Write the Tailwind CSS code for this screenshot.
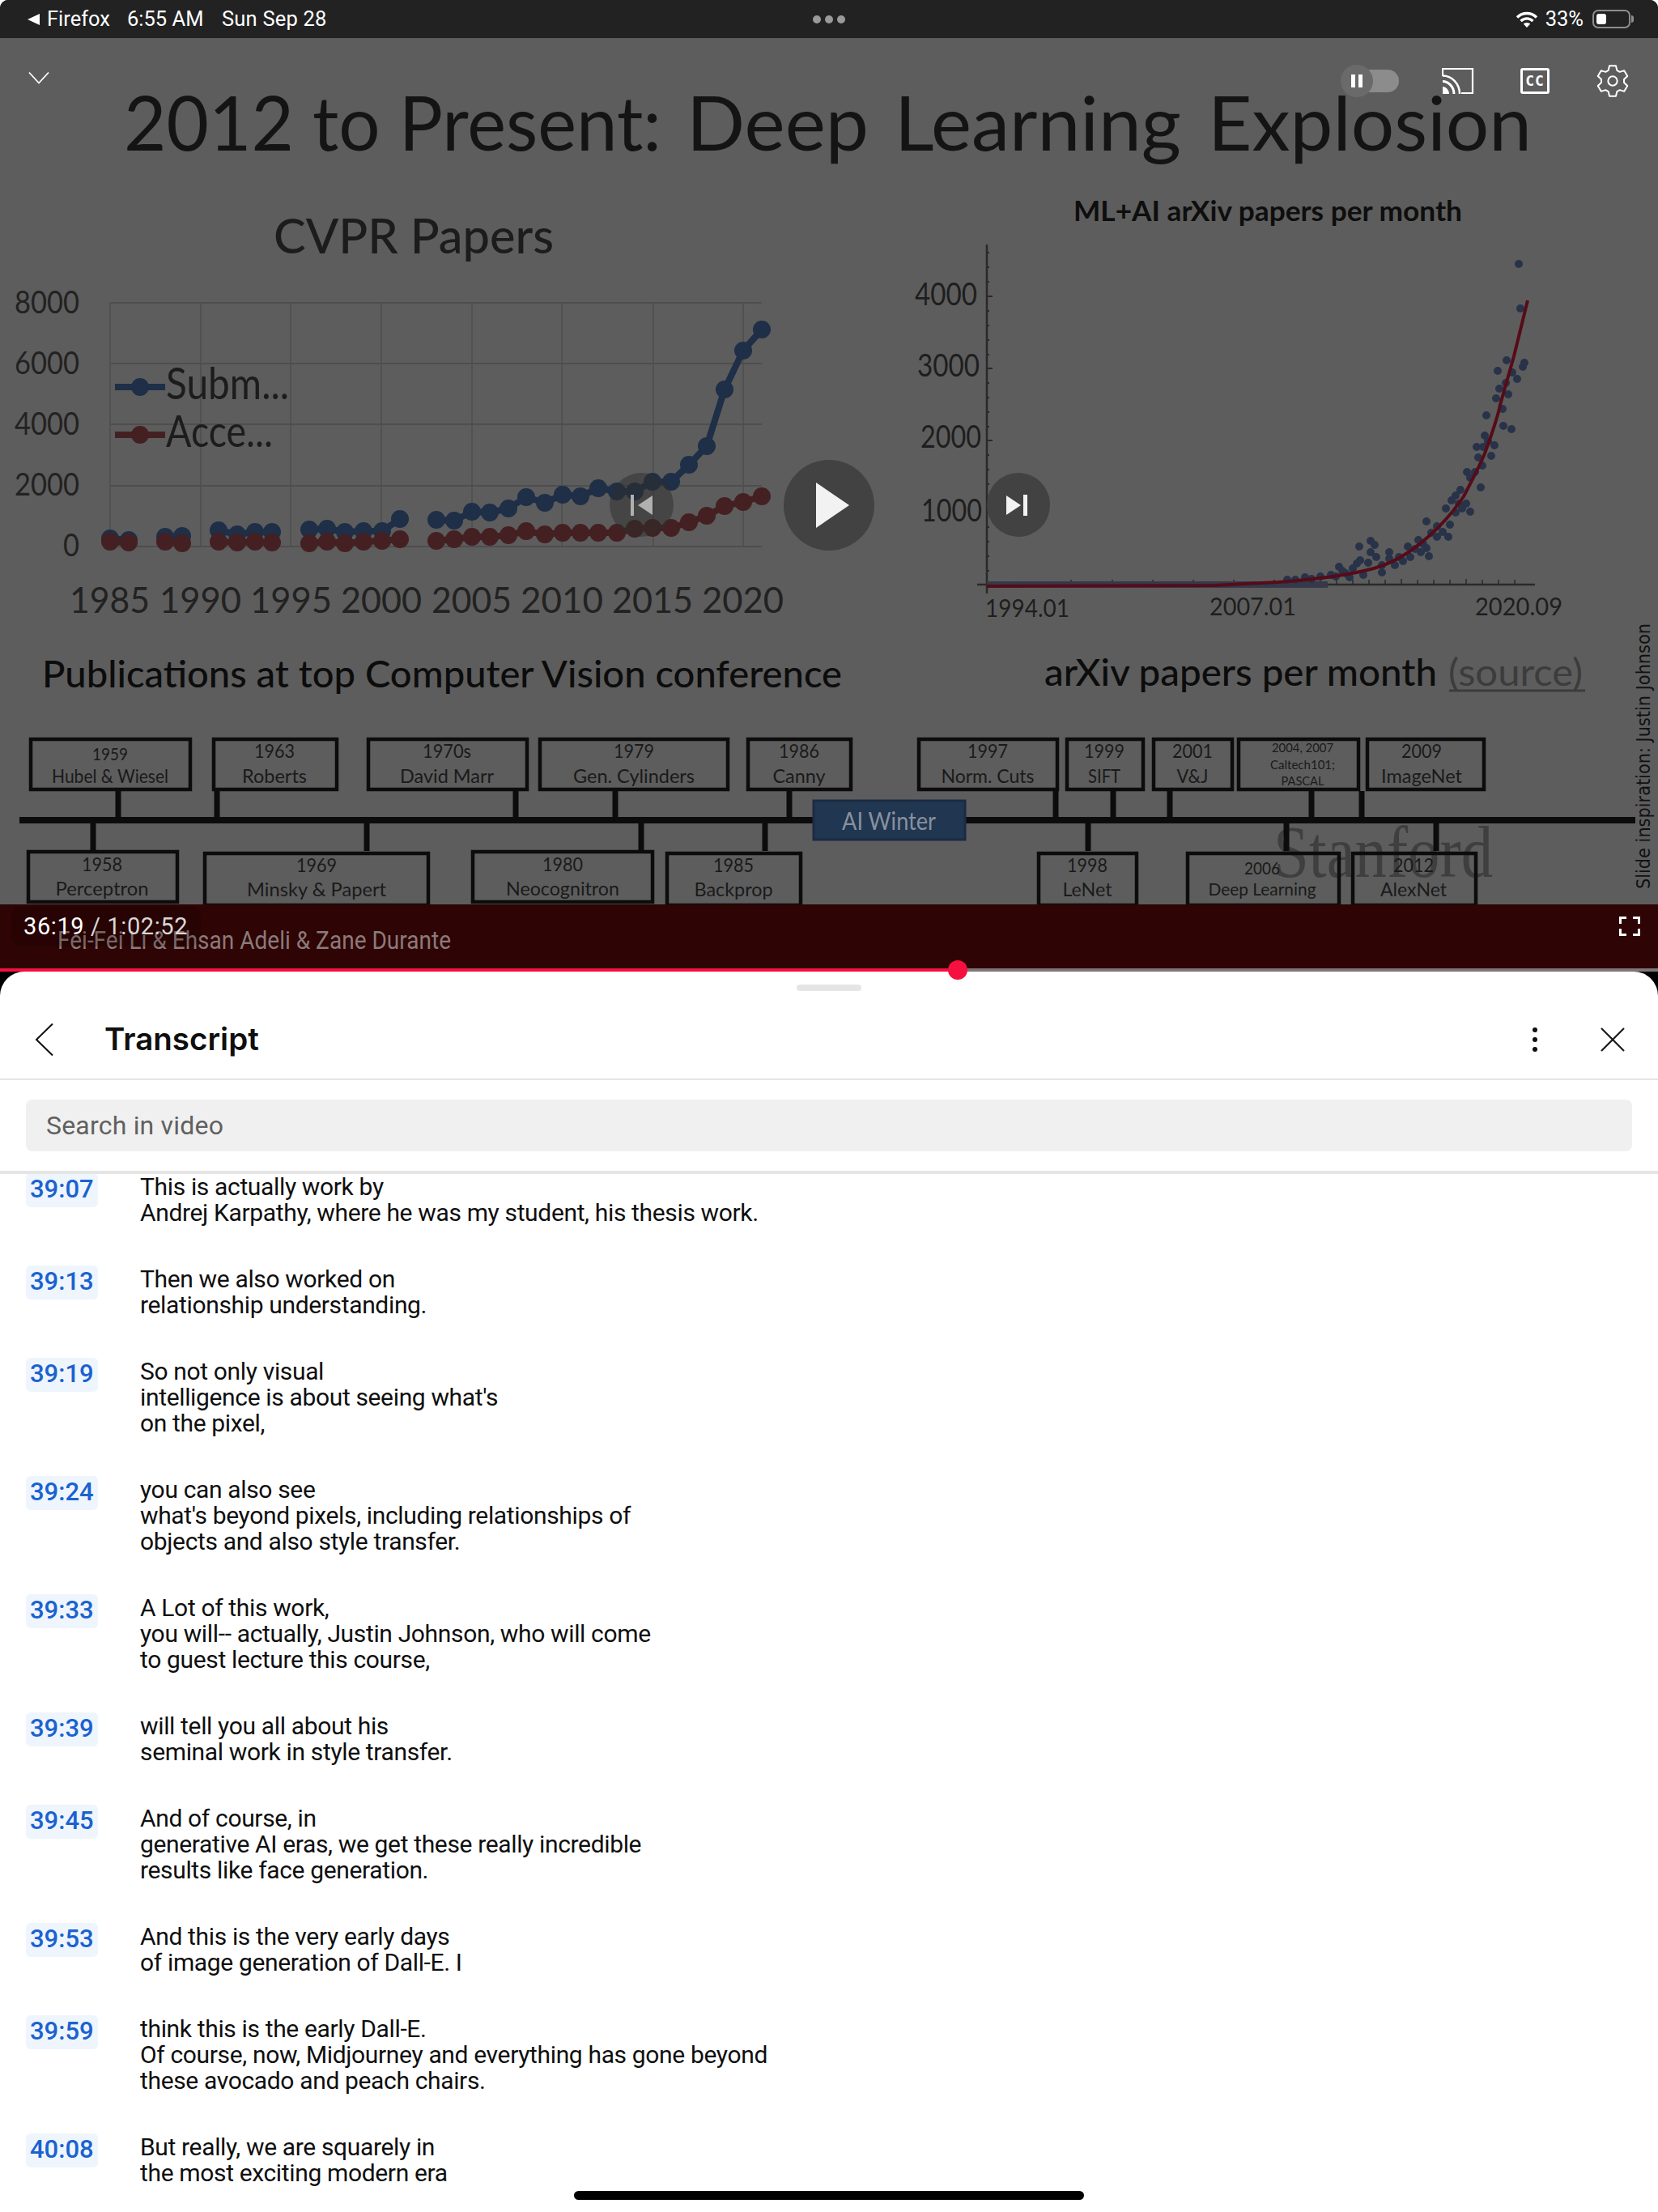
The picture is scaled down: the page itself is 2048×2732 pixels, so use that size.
<!DOCTYPE html>
<html lang="en">
<head>
<meta charset="UTF-8">
<title>Transcript</title>
<script src="https://cdn.jsdelivr.net/npm/@tailwindcss/browser@4"></script>
</head>
<body class="bg-white">
<div class="w-[2048px] h-[2732px] flex flex-col overflow-hidden relative bg-black font-[Roboto] rounded-t-[10px]">

  <!-- status bar -->
  <div class="h-[47px] shrink-0 bg-[#222222] text-white text-[25.5px] relative flex items-center justify-between pl-[34px] pr-[30px]">
    <div class="flex items-center">
      <svg width="15" height="14" viewBox="0 0 15 14" class="mr-[9px]"><path d="M15 0v14L0 7z" fill="#fff"/></svg>
      <span class="w-[99px]">Firefox</span>
      <span class="w-[117px]">6:55 AM</span>
      <span class="tracking-[0.2px]">Sun Sep 28</span>
    </div>
    <div class="absolute left-[1004px] top-[19px] flex gap-[5px]">
      <div class="w-[10px] h-[10px] rounded-full bg-[#9a9a9a]"></div>
      <div class="w-[10px] h-[10px] rounded-full bg-[#9a9a9a]"></div>
      <div class="w-[10px] h-[10px] rounded-full bg-[#9a9a9a]"></div>
    </div>
    <div class="flex items-center">
      <svg width="28" height="20" viewBox="0 0 28 20" class="mr-[9px]" fill="none" stroke="#fff" stroke-width="3.4">
        <path d="M2 7.5c7-6.600 17-6.600 24 0"/><path d="M6.500 12c4.500-4.200 10.500-4.200 15 0"/><path d="M14 20l-4.200-4.600c2.400-2 6-2 8.400 0z" fill="#fff" stroke="none"/>
      </svg>
      <span class="mr-[11px]">33%</span>
      <div class="w-[47px] h-[23px] rounded-[7px] border-2 border-[#8e8e8e] p-[3px]">
        <div class="w-[12px] h-full rounded-[3px] bg-white"></div>
      </div>
      <div class="w-[3px] h-[9px] rounded-r-full bg-[#8e8e8e] ml-[1px]"></div>
    </div>
  </div>

  <!-- video -->
  <div class="h-[1153px] shrink-0 relative z-10 bg-[#5d5d5d]">
    <svg width="2048" height="1153" viewBox="0 47 2048 1153" class="block font-[Lato]" fill="#1c1c1c">
      <g font-size="94" fill="#141414">
        <text x="153" y="186" textLength="664" lengthAdjust="spacingAndGlyphs">2012 to Present:</text>
        <text x="848" y="186" textLength="225" lengthAdjust="spacingAndGlyphs">Deep</text>
        <text x="1105" y="186" textLength="354" lengthAdjust="spacingAndGlyphs">Learning</text>
        <text x="1492" y="186" textLength="400" lengthAdjust="spacingAndGlyphs">Explosion</text>
      </g>

      <!-- CVPR chart -->
      <text x="338" y="313" font-size="60" textLength="346" lengthAdjust="spacingAndGlyphs" fill="#1c1c1c" font-weight="500">CVPR Papers</text>
      <g stroke="#4e4e4e" stroke-width="2" fill="none">
        <path d="M136 374H941M136 449H941M136 524H941M136 600H941M136 675H941"/>
        <path d="M136 374V675M248 374V675M359 374V675M471 374V675M583 374V675M694 374V675M807 374V675M918 374V675" stroke-width="1.500"/>
      </g>
      <g font-size="38" fill="#222" text-anchor="end">
        <text x="98" y="387" textLength="80" lengthAdjust="spacingAndGlyphs">8000</text>
        <text x="98" y="462" textLength="80" lengthAdjust="spacingAndGlyphs">6000</text>
        <text x="98" y="537" textLength="80" lengthAdjust="spacingAndGlyphs">4000</text>
        <text x="98" y="612" textLength="80" lengthAdjust="spacingAndGlyphs">2000</text>
        <text x="98" y="687" textLength="20" lengthAdjust="spacingAndGlyphs">0</text>
      </g>
      <path d="M136 665L159 667M204 663L225 662M270 655L293 660L315 657L336 657M382 654L404 653L426 657L449 656L472 656L494 641M539 642L561 643L583 632L605 633L628 628L650 614L673 621L695 611L717 613L739 603L762 607L784 607L806 595L829 595L851 574L873 551L895 481L918 433L941 407M142 478H204" fill="none" stroke="#1e2f47" stroke-width="8" stroke-linejoin="round"/>
      <path d="M136 665h0M159 667h0M204 663h0M225 662h0M270 655h0M293 660h0M315 657h0M336 657h0M382 654h0M404 653h0M426 657h0M449 656h0M472 656h0M494 641h0M539 642h0M561 643h0M583 632h0M605 633h0M628 628h0M650 614h0M673 621h0M695 611h0M717 613h0M739 603h0M762 607h0M784 607h0M806 595h0M829 595h0M851 574h0M873 551h0M895 481h0M918 433h0M941 407h0M173 478h0" stroke="#1e2f47" stroke-width="22" stroke-linecap="round" fill="none"/>
      <path d="M136 669L159 670M204 669L225 671M270 669L293 670L315 669L336 670M382 671L404 669L426 671L449 669L472 668L494 666M539 668L561 666L583 663L605 663L628 661L650 656L673 660L695 658L717 658L739 658L762 658L784 653L806 652L829 652L851 645L873 637L895 625L918 620L941 613M142 537H204" stroke="#452022" stroke-width="8" fill="none"/>
      <path d="M136 669h0M159 670h0M204 669h0M225 671h0M270 669h0M293 670h0M315 669h0M336 670h0M382 671h0M404 669h0M426 671h0M449 669h0M472 668h0M494 666h0M539 668h0M561 666h0M583 663h0M605 663h0M628 661h0M650 656h0M673 660h0M695 658h0M717 658h0M739 658h0M762 658h0M784 653h0M806 652h0M829 652h0M851 645h0M873 637h0M895 625h0M918 620h0M941 613h0M173 537h0" stroke="#452022" stroke-width="22" stroke-linecap="round" fill="none"/>
      <text x="205" y="493" font-size="54" textLength="152" lengthAdjust="spacingAndGlyphs" fill="#1c1c1c">Subm...</text>
      <text x="205" y="552" font-size="54" textLength="132" lengthAdjust="spacingAndGlyphs" fill="#1c1c1c">Acce...</text>
      <g font-size="44" fill="#222">
        <text x="86" y="757" textLength="99" lengthAdjust="spacingAndGlyphs">1985</text>
        <text x="197" y="757" textLength="101" lengthAdjust="spacingAndGlyphs">1990</text>
        <text x="309" y="757" textLength="101" lengthAdjust="spacingAndGlyphs">1995</text>
        <text x="421" y="757" textLength="100" lengthAdjust="spacingAndGlyphs">2000</text>
        <text x="533" y="757" textLength="99" lengthAdjust="spacingAndGlyphs">2005</text>
        <text x="643" y="757" textLength="102" lengthAdjust="spacingAndGlyphs">2010</text>
        <text x="756" y="757" textLength="100" lengthAdjust="spacingAndGlyphs">2015</text>
        <text x="867" y="757" textLength="101" lengthAdjust="spacingAndGlyphs">2020</text>
      </g>
      <text x="52" y="849" font-size="47" textLength="988" lengthAdjust="spacingAndGlyphs" fill="#0c0c0c" font-weight="500">Publications at top Computer Vision conference</text>

      <!-- arXiv chart -->
      <text x="1326" y="273" font-size="35" textLength="480" lengthAdjust="spacingAndGlyphs" fill="#0e0e0e" font-weight="700">ML+AI arXiv papers per month</text>
      <g font-size="38" fill="#1e1e1e">
        <text x="1130" y="377" textLength="77" lengthAdjust="spacingAndGlyphs">4000</text>
        <text x="1133" y="465" textLength="77" lengthAdjust="spacingAndGlyphs">3000</text>
        <text x="1137" y="553" textLength="75" lengthAdjust="spacingAndGlyphs">2000</text>
        <text x="1138" y="644" textLength="75" lengthAdjust="spacingAndGlyphs">1000</text>
      </g>
      <g stroke="#2a2a2a" fill="none">
        <path d="M1219 302V733M1207 722H1896" stroke-width="2.500"/>
        <path d="M1219 366h7M1219 455h7M1219 544h7M1219 633h7M1219 312h3M1219 330h3M1219 348h3M1219 384h3M1219 402h3M1219 420h3M1219 438h3M1219 473h3M1219 491h3M1219 509h3M1219 527h3M1219 562h3M1219 580h3M1219 598h3M1219 616h3M1219 651h3M1219 669h3M1219 687h3M1219 705h3" stroke-width="2"/>
        <path d="M1323 722v-6M1374 722v-6M1424 722v-6M1474 722v-6M1524 722v-6M1574 722v-6M1631 722v-6M1651 722v-7M1671 722v-6M1691 722v-6M1711 722v-6M1731 722v-7M1751 722v-6M1771 722v-6M1791 722v-6M1811 722v-7M1831 722v-6M1851 722v-6M1871 722v-6" stroke-width="1.500"/>
      </g>
      <path d="M1219 722H1640" stroke="#35394a" stroke-width="8" fill="none"/>
      <path d="M1876 326h0M1878 381h0M1861 445h0M1883 448h0M1850 458h0M1881 453h0M1860 473h0M1874 468h0M1852 480h0M1848 492h0M1863 487h0M1836 513h0M1857 526h0M1867 530h0M1834 538h0M1824 552h0M1846 550h0M1842 563h0M1826 565h0M1831 575h0M1812 583h0M1822 583h0M1829 602h0M1798 612h0M1793 618h0M1811 622h0M1786 628h0M1816 632h0M1798 633h0M1762 644h0M1791 648h0M1775 650h0M1782 657h0M1789 663h0M1775 663h0M1752 667h0M1739 675h0M1762 677h0M1679 675h0M1693 668h0M1698 673h0M1693 682h0M1716 682h0M1755 682h0M1765 687h0M1742 688h0M1716 690h0M1733 693h0M1680 692h0M1690 695h0M1723 698h0M1654 700h0M1707 698h0M1671 702h0M1707 707h0M1658 705h0M1684 710h0M1667 713h0M1631 712h0M1612 713h0M1644 710h0M1590 716h0M1838 545h0M1832 552h0M1816 590h0M1804 605h0M1802 622h0M1806 628h0M1768 658h0M1758 672h0M1748 678h0M1728 688h0M1700 688h0M1676 696h0M1662 708h0M1650 712h0M1620 715h0M1600 716h0M1868 460h0M1856 505h0" stroke="#283349" stroke-width="10" stroke-linecap="round" fill="none"/>
      <path d="M1219 724L1500 723L1579 719C1620 716 1660 712 1697 702C1730 693 1755 672 1775 653C1790 638 1800 625 1808 613C1820 590 1828 575 1834 560C1845 530 1850 515 1853 500L1870 440L1887 371" stroke="#560c18" stroke-width="4" fill="none"/>
      <g font-size="30" fill="#1e1e1e">
        <text x="1217" y="762" textLength="104" lengthAdjust="spacingAndGlyphs">1994.01</text>
        <text x="1494" y="760" textLength="107" lengthAdjust="spacingAndGlyphs">2007.01</text>
        <text x="1822" y="760" textLength="108" lengthAdjust="spacingAndGlyphs">2020.09</text>
      </g>
      <text x="1290" y="847" font-size="47" textLength="485" lengthAdjust="spacingAndGlyphs" fill="#0c0c0c" font-weight="500">arXiv papers per month</text>
      <text x="1789" y="847" font-size="47" textLength="166" lengthAdjust="spacingAndGlyphs" fill="#3c3c3c">(source)</text>
      <path d="M1790 853H1958" stroke="#3c3c3c" stroke-width="3"/>
      <text transform="translate(2038 1098) rotate(-90)" font-size="23" font-family="DejaVu Sans" textLength="328" lengthAdjust="spacingAndGlyphs" fill="#111">Slide inspiration: Justin Johnson</text>

      <!-- timeline -->
      <text x="1573" y="1083" font-size="92" font-family="Liberation Serif" textLength="271" lengthAdjust="spacingAndGlyphs" fill="#3f3f3f">Stanford</text>
      <g stroke="#0c0c0c" stroke-width="4.500" fill="none">
        <rect x="38" y="913" width="197" height="62"/><rect x="264" y="913" width="152" height="62"/><rect x="455" y="913" width="196" height="62"/><rect x="667" y="913" width="232" height="62"/><rect x="924" y="913" width="127" height="62"/>
        <rect x="1135" y="913" width="171" height="62"/><rect x="1318" y="913" width="94" height="62"/><rect x="1425" y="913" width="97" height="62"/><rect x="1530" y="913" width="148" height="62"/><rect x="1689" y="913" width="144" height="62"/>
        <rect x="35" y="1052" width="184" height="62"/><rect x="253" y="1054" width="276" height="64"/><rect x="584" y="1052" width="222" height="62"/><rect x="824" y="1054" width="165" height="64"/>
        <rect x="1283" y="1054" width="121" height="64"/><rect x="1467" y="1054" width="187" height="64"/><rect x="1671" y="1054" width="152" height="64"/>
        <path stroke-width="7" d="M146 977V1010M268 977V1010M637 977V1010M760 977V1010M975 977V1010M1304 977V1010M1375 977V1010M1445 977V1010M1620 977V1010M1682 977V1010M115 1016V1051M453 1016V1051M792 1016V1051M945 1016V1051M1344 1016V1051M1589 1016V1051M1774 1016V1051"/>
        <path stroke-width="8" d="M24 1013H2020"/>
      </g>
      <g text-anchor="middle" fill="#1a1a1a" font-size="24">
        <text x="136" y="939" font-size="21" textLength="44" lengthAdjust="spacingAndGlyphs">1959</text><text x="136" y="967" font-size="23" textLength="144" lengthAdjust="spacingAndGlyphs">Hubel &amp; Wiesel</text>
        <text x="339" y="936" textLength="50" lengthAdjust="spacingAndGlyphs">1963</text><text x="339" y="967" textLength="80" lengthAdjust="spacingAndGlyphs">Roberts</text>
        <text x="552" y="936" textLength="60" lengthAdjust="spacingAndGlyphs">1970s</text><text x="552" y="967" textLength="116" lengthAdjust="spacingAndGlyphs">David Marr</text>
        <text x="783" y="936" textLength="50" lengthAdjust="spacingAndGlyphs">1979</text><text x="783" y="967" textLength="150" lengthAdjust="spacingAndGlyphs">Gen. Cylinders</text>
        <text x="987" y="936" textLength="50" lengthAdjust="spacingAndGlyphs">1986</text><text x="987" y="967" textLength="65" lengthAdjust="spacingAndGlyphs">Canny</text>
        <text x="1220" y="936" textLength="50" lengthAdjust="spacingAndGlyphs">1997</text><text x="1220" y="967" textLength="115" lengthAdjust="spacingAndGlyphs">Norm. Cuts</text>
        <text x="1364" y="936" textLength="50" lengthAdjust="spacingAndGlyphs">1999</text><text x="1364" y="967" textLength="40" lengthAdjust="spacingAndGlyphs">SIFT</text>
        <text x="1473" y="936" textLength="50" lengthAdjust="spacingAndGlyphs">2001</text><text x="1473" y="967" textLength="39" lengthAdjust="spacingAndGlyphs">V&amp;J</text>
        <text x="1609" y="929" font-size="16" textLength="76" lengthAdjust="spacingAndGlyphs">2004, 2007</text><text x="1609" y="950" font-size="16" textLength="80" lengthAdjust="spacingAndGlyphs">Caltech101;</text><text x="1609" y="970" font-size="16" textLength="53" lengthAdjust="spacingAndGlyphs">PASCAL</text>
        <text x="1756" y="936" textLength="50" lengthAdjust="spacingAndGlyphs">2009</text><text x="1756" y="967" textLength="100" lengthAdjust="spacingAndGlyphs">ImageNet</text>
        <text x="126" y="1076" textLength="50" lengthAdjust="spacingAndGlyphs">1958</text><text x="126" y="1106" textLength="115" lengthAdjust="spacingAndGlyphs">Perceptron</text>
        <text x="391" y="1077" textLength="50" lengthAdjust="spacingAndGlyphs">1969</text><text x="391" y="1107" textLength="172" lengthAdjust="spacingAndGlyphs">Minsky &amp; Papert</text>
        <text x="695" y="1076" textLength="50" lengthAdjust="spacingAndGlyphs">1980</text><text x="695" y="1106" textLength="140" lengthAdjust="spacingAndGlyphs">Neocognitron</text>
        <text x="906" y="1077" textLength="50" lengthAdjust="spacingAndGlyphs">1985</text><text x="906" y="1107" textLength="97" lengthAdjust="spacingAndGlyphs">Backprop</text>
        <text x="1343" y="1077" textLength="50" lengthAdjust="spacingAndGlyphs">1998</text><text x="1343" y="1107" textLength="61" lengthAdjust="spacingAndGlyphs">LeNet</text>
        <text x="1559" y="1080" font-size="22" textLength="44" lengthAdjust="spacingAndGlyphs">2006</text><text x="1559" y="1106" font-size="22" textLength="133" lengthAdjust="spacingAndGlyphs">Deep Learning</text>
        <text x="1746" y="1077" textLength="50" lengthAdjust="spacingAndGlyphs">2012</text><text x="1746" y="1107" textLength="82" lengthAdjust="spacingAndGlyphs">AlexNet</text>
      </g>
      <rect x="1005" y="989" width="187" height="48" fill="#213650" stroke="#1a2c44" stroke-width="3"/>
      <text x="1098" y="1025" font-size="31" text-anchor="middle" textLength="116" lengthAdjust="spacingAndGlyphs" fill="#87919e">AI Winter</text>

      <rect x="0" y="1117" width="2048" height="80" fill="#2e0404"/>
      <text x="71" y="1172" font-size="31" textLength="486" lengthAdjust="spacingAndGlyphs" fill="#8b7a7a" font-family="Roboto">Fei-Fei Li &amp; Ehsan Adeli &amp; Zane Durante</text>
    </svg>

    <!-- player controls -->
    <svg width="26" height="16" viewBox="0 0 26 16" class="absolute left-[35px] top-[41px]" fill="none" stroke="#fff" stroke-width="1.800"><path d="M1 1.500l12 13 12-13"/></svg>

    <div class="absolute left-[1676px] top-[39px] w-[52px] h-[28px] rounded-full bg-[#8c8c8c]"></div>
    <div class="absolute left-[1656px] top-[33px] w-[40px] h-[40px] rounded-full bg-[#6a6a6a] flex items-center justify-center gap-[4px]">
      <div class="w-[5px] h-[16px] bg-white"></div>
      <div class="w-[5px] h-[16px] bg-white"></div>
    </div>

    <svg width="40" height="34" viewBox="0 0 40 34" class="absolute left-[1781px] top-[36px]" fill="none" stroke="#fff">
      <path d="M1 11V2H38V32H24" stroke-width="2.200"/>
      <path d="M1 10.500C12 10.500 22 20 22 33" stroke-width="2.500"/>
      <path d="M1 17.500C8 17.500 15 24 15 33" stroke-width="3"/>
      <path d="M1 24C5 24 9 28 9 33H1z" fill="#fff" stroke="none"/>
    </svg>
    <div class="absolute left-[1878px] top-[37px] w-[36px] h-[32px] border-[3px] border-white rounded-[3px] text-white text-[18px] leading-[26px] font-bold text-center tracking-[1px] font-['DejaVu_Sans_Mono']">CC</div>
    <svg width="40" height="40" viewBox="0 0 24 24" class="absolute left-[1972px] top-[33px]" fill="none" stroke="#fff" stroke-width="1.200" stroke-linejoin="round">
      <path d="M9.600 .75H14.400L15.180 4.120L17.230 5.300L20.550 4.300L22.940 8.450L20.420 10.820V13.180L22.940 15.550L20.550 19.700L17.230 18.700L15.180 19.880L14.390 23.250H9.610L8.820 19.880L6.770 18.700L3.450 19.700L1.060 15.550L3.580 13.180V10.820L1.060 8.450L3.450 4.300L6.770 5.300L8.820 4.120z"/>
      <circle cx="12" cy="12" r="3.400"/>
    </svg>

    <div class="absolute left-[753px] top-[537px] w-[79px] h-[79px] rounded-full bg-[#2e2e2e]/50 flex items-center justify-center">
      <svg width="27" height="26" viewBox="0 0 27 26"><path d="M0 0h4v26H0z" fill="#b0b0b0"/><path d="M27 1v24L9 13z" fill="#b0b0b0"/></svg>
    </div>
    <div class="absolute left-[968px] top-[521px] w-[112px] h-[112px] rounded-full bg-[#424242] flex items-center justify-center">
      <svg width="41" height="56" viewBox="0 0 41 56" class="ml-[8px]"><path d="M0 0l41 28L0 56z" fill="#f2f2f2"/></svg>
    </div>
    <div class="absolute left-[1219px] top-[537px] w-[78px] h-[79px] rounded-full bg-[#424242] flex items-center justify-center">
      <svg width="26" height="26" viewBox="0 0 26 26" class="-ml-[4px]"><path d="M0 1v24l18-12z" fill="#f2f2f2"/><path d="M21 0h5v26h-5z" fill="#f2f2f2"/></svg>
    </div>

    <div class="absolute left-[14px] top-[1072px] w-[234px] h-[50px] rounded-[14px] bg-black/15 text-[29px] leading-[50px] pl-[15px] tracking-[0.6px] text-white">36:19 <span class="text-[#d8d8d8]">/ 1:02:52</span></div>
    <svg width="26" height="24" viewBox="0 0 26 24" class="absolute left-[2000px] top-[1085px]" fill="none" stroke="#fff" stroke-width="3"><path d="M9 1.500H1.500V9M17 1.500H24.500V9M9 22.500H1.500V15M17 22.500H24.500V15"/></svg>

    <!-- progress -->
    <div class="absolute left-0 right-0 bottom-0 h-[4px] bg-[#7f7777]">
      <div class="w-[1183px] h-full bg-[#f5103f]"></div>
    </div>
    <div class="absolute left-[1171px] top-[1139px] w-[24px] h-[24px] rounded-full bg-[#f5103f]"></div>
  </div>

  <!-- transcript panel -->
  <div class="flex-1 min-h-0 flex flex-col bg-white rounded-t-[30px]">
    <div class="mt-[16px] mx-auto w-[80px] h-[8px] rounded-full bg-[#e5e5e5] shrink-0"></div>
    <div class="h-[110px] shrink-0 pt-[12px] flex items-center border-b-2 border-[#e5e5e5] text-[#0f0f0f]">
      <svg width="24" height="42" viewBox="0 0 24 42" class="ml-[43px]" fill="none" stroke="#0f0f0f" stroke-width="2"><path d="M22 1.500L2 21l20 19.500"/></svg>
      <div class="ml-[62px] text-[38.5px] font-semibold font-[Inter]">Transcript</div>
      <svg width="8" height="32" viewBox="0 0 8 32" class="ml-auto" fill="#0f0f0f"><circle cx="4" cy="4" r="3"/><circle cx="4" cy="16" r="3"/><circle cx="4" cy="28" r="3"/></svg>
      <svg width="32" height="32" viewBox="0 0 32 32" class="ml-[76px] mr-[40px]" fill="none" stroke="#1a1a1a" stroke-width="2.200"><path d="M2 2l28 28M30 2L2 30"/></svg>
    </div>
    <div class="shrink-0 px-[32px] py-[24px] border-b-4 border-[#e5e5e5]">
      <div class="h-[64px] rounded-[8px] bg-[#f0f0f0] pl-[25px] flex items-center text-[32px] tracking-[0.2px] text-[#606060]">Search in video</div>
    </div>

    <div class="flex-1 min-h-0 overflow-hidden text-[30px] leading-[32px] tracking-[-0.35px] text-[#0f0f0f]">
      <div class="flex pb-[50px]">
        <div class="w-[173px] shrink-0 pl-[32px]"><span class="inline-block -mt-px h-[42px] px-[5px] rounded-[6px] bg-[#eef5fd] text-[#1a62d0] text-[31px] tracking-normal font-medium leading-[40px]">39:07</span></div>
        <div>This is actually work by<br>Andrej Karpathy, where he was my student, his thesis work.</div>
      </div>
      <div class="flex pb-[50px]">
        <div class="w-[173px] shrink-0 pl-[32px]"><span class="inline-block -mt-px h-[42px] px-[5px] rounded-[6px] bg-[#eef5fd] text-[#1a62d0] text-[31px] tracking-normal font-medium leading-[40px]">39:13</span></div>
        <div>Then we also worked on<br>relationship understanding.</div>
      </div>
      <div class="flex pb-[50px]">
        <div class="w-[173px] shrink-0 pl-[32px]"><span class="inline-block -mt-px h-[42px] px-[5px] rounded-[6px] bg-[#eef5fd] text-[#1a62d0] text-[31px] tracking-normal font-medium leading-[40px]">39:19</span></div>
        <div>So not only visual<br>intelligence is about seeing what's<br>on the pixel,</div>
      </div>
      <div class="flex pb-[50px]">
        <div class="w-[173px] shrink-0 pl-[32px]"><span class="inline-block -mt-px h-[42px] px-[5px] rounded-[6px] bg-[#eef5fd] text-[#1a62d0] text-[31px] tracking-normal font-medium leading-[40px]">39:24</span></div>
        <div>you can also see<br>what's beyond pixels, including relationships of<br>objects and also style transfer.</div>
      </div>
      <div class="flex pb-[50px]">
        <div class="w-[173px] shrink-0 pl-[32px]"><span class="inline-block -mt-px h-[42px] px-[5px] rounded-[6px] bg-[#eef5fd] text-[#1a62d0] text-[31px] tracking-normal font-medium leading-[40px]">39:33</span></div>
        <div>A Lot of this work,<br>you will-- actually, Justin Johnson, who will come<br>to guest lecture this course,</div>
      </div>
      <div class="flex pb-[50px]">
        <div class="w-[173px] shrink-0 pl-[32px]"><span class="inline-block -mt-px h-[42px] px-[5px] rounded-[6px] bg-[#eef5fd] text-[#1a62d0] text-[31px] tracking-normal font-medium leading-[40px]">39:39</span></div>
        <div>will tell you all about his<br>seminal work in style transfer.</div>
      </div>
      <div class="flex pb-[50px]">
        <div class="w-[173px] shrink-0 pl-[32px]"><span class="inline-block -mt-px h-[42px] px-[5px] rounded-[6px] bg-[#eef5fd] text-[#1a62d0] text-[31px] tracking-normal font-medium leading-[40px]">39:45</span></div>
        <div>And of course, in<br>generative AI eras, we get these really incredible<br>results like face generation.</div>
      </div>
      <div class="flex pb-[50px]">
        <div class="w-[173px] shrink-0 pl-[32px]"><span class="inline-block -mt-px h-[42px] px-[5px] rounded-[6px] bg-[#eef5fd] text-[#1a62d0] text-[31px] tracking-normal font-medium leading-[40px]">39:53</span></div>
        <div>And this is the very early days<br>of image generation of Dall-E. I</div>
      </div>
      <div class="flex pb-[50px]">
        <div class="w-[173px] shrink-0 pl-[32px]"><span class="inline-block -mt-px h-[42px] px-[5px] rounded-[6px] bg-[#eef5fd] text-[#1a62d0] text-[31px] tracking-normal font-medium leading-[40px]">39:59</span></div>
        <div>think this is the early Dall-E.<br>Of course, now, Midjourney and everything has gone beyond<br>these avocado and peach chairs.</div>
      </div>
      <div class="flex pb-[50px]">
        <div class="w-[173px] shrink-0 pl-[32px]"><span class="inline-block -mt-px h-[42px] px-[5px] rounded-[6px] bg-[#eef5fd] text-[#1a62d0] text-[31px] tracking-normal font-medium leading-[40px]">40:08</span></div>
        <div>But really, we are squarely in<br>the most exciting modern era</div>
      </div>
    </div>
  </div>

  <!-- home indicator -->
  <div class="absolute left-[709px] top-[2706px] w-[630px] h-[11px] rounded-full bg-black"></div>
</div>
</body>
</html>
